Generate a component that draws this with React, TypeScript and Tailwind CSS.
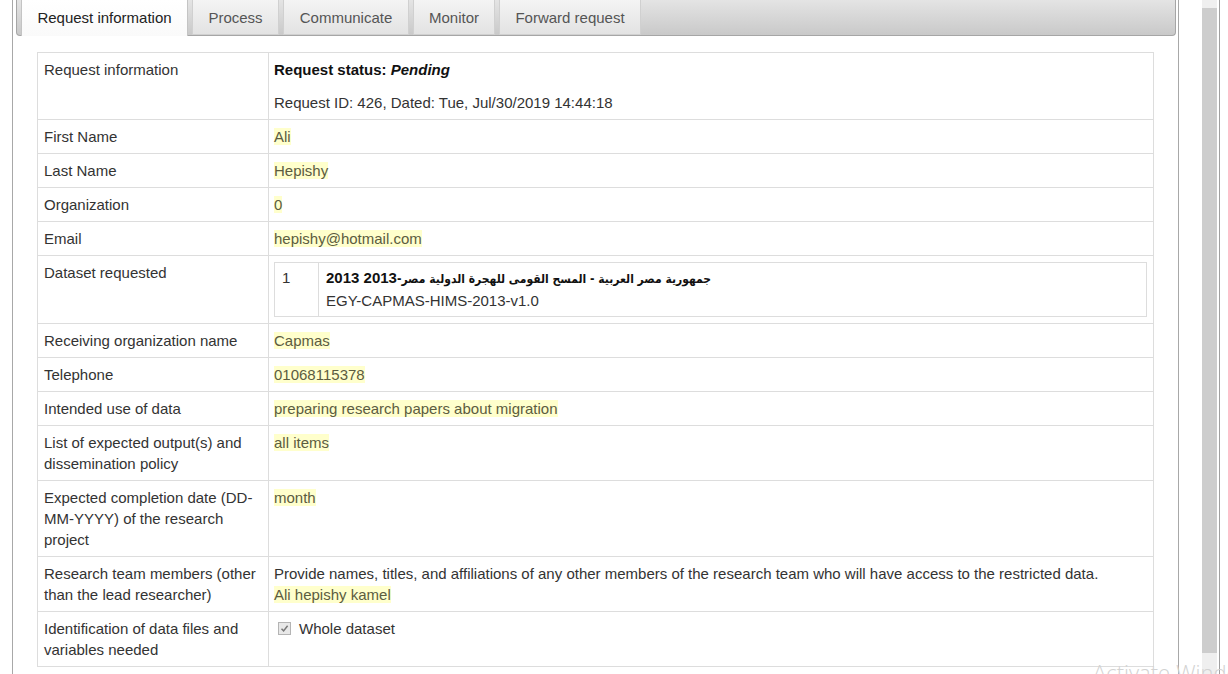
import React from "react";

type Row = {
  label: React.ReactNode;
  value: React.ReactNode;
};

const FONT = { fontFamily: '"Liberation Sans", Arial, "DejaVu Sans", sans-serif' };
const ARABIC = { fontFamily: '"DejaVu Sans Condensed", "DejaVu Sans", sans-serif' };

function Hl({ children }: { children: React.ReactNode }) {
  return <span className="bg-[#ffffcc] text-[#5c5c40]">{children}</span>;
}

const tabs = [
  { name: "Request information", w: "w-[167px]", active: true },
  { name: "Process", w: "w-[87px]", active: false },
  { name: "Communicate", w: "w-[126px]", active: false },
  { name: "Monitor", w: "w-[82px]", active: false },
  { name: "Forward request", w: "w-[142px]", active: false },
];

const rows: Row[] = [
  {
    label: "Request information",
    value: (
      <>
        <div className="mb-[12px] font-bold text-[#111]">
          Request status: <i>Pending</i>
        </div>
        <div>Request ID: 426, Dated: Tue, Jul/30/2019 14:44:18</div>
      </>
    ),
  },
  { label: "First Name", value: <Hl>Ali</Hl> },
  { label: "Last Name", value: <Hl>Hepishy</Hl> },
  { label: "Organization", value: <Hl>0</Hl> },
  { label: "Email", value: <Hl>hepishy@hotmail.com</Hl> },
  {
    label: "Dataset requested",
    value: (
      <table className="w-full border-collapse border border-[#dddddd] leading-[22px]">
        <tbody>
          <tr>
            <td className="w-[44px] border-r border-[#dddddd] px-[7px] pt-[4px] pb-[4px] align-top">1</td>
            <td className="px-[7px] pt-[4px] pb-[4px] align-top">
              <div className="font-bold text-[#111]">
                <span className="text-[12px]" style={ARABIC}>
                  جمهورية مصر العربية - المسح القومى للهجرة الدولية مصر-
                </span>
                2013 2013
              </div>
              <div>EGY-CAPMAS-HIMS-2013-v1.0</div>
            </td>
          </tr>
        </tbody>
      </table>
    ),
  },
  { label: "Receiving organization name", value: <Hl>Capmas</Hl> },
  { label: "Telephone", value: <Hl>01068115378</Hl> },
  { label: "Intended use of data", value: <Hl>preparing research papers about migration</Hl> },
  {
    label: (
      <>
        List of expected output(s) and
        <br />
        dissemination policy
      </>
    ),
    value: <Hl>all items</Hl>,
  },
  {
    label: (
      <>
        Expected completion date (DD-
        <br />
        MM-YYYY) of the research
        <br />
        project
      </>
    ),
    value: <Hl>month</Hl>,
  },
  {
    label: (
      <>
        Research team members (other
        <br />
        than the lead researcher)
      </>
    ),
    value: (
      <>
        <div>
          Provide names, titles, and affiliations of any other members of the research team who will
          have access to the restricted data.
        </div>
        <div>
          <Hl>Ali hepishy kamel</Hl>
        </div>
      </>
    ),
  },
  {
    label: (
      <>
        Identification of data files and
        <br />
        variables needed
      </>
    ),
    value: (
      <div className="flex items-center">
        <span className="ml-[4px] mr-[8px] flex h-[13px] w-[13px] items-center justify-center border border-[#b4b4b4] bg-[#e8e8e8]">
          <svg width="9" height="9" viewBox="0 0 9 9">
            <path d="M1.5 4.8 L3.6 6.9 L7.6 1.8" fill="none" stroke="#777" strokeWidth="1.5" />
          </svg>
        </span>
        <span>Whole dataset</span>
      </div>
    ),
  },
];

export default function App() {
  return (
    <div
      className="relative flex h-[674px] w-[1228px] overflow-hidden bg-white text-[15px] text-[#333]"
      style={FONT}
    >
      <div className="w-[12px] shrink-0" />
      {/* panel */}
      <div className="h-full w-[1167px] shrink-0 border-x border-[#a8a8a8]">
        <div className="ml-[3px] h-[36px] w-[1160px] rounded-b-[4px] border-x border-b border-[#a6a6a6] bg-gradient-to-b from-[#e4e4e4] to-[#c9c9c9]">
          <div className="flex h-full items-start gap-[4px] pl-[4px]">
            {tabs.map((t) => (
              <div
                key={t.name}
                className={
                  t.active
                    ? `relative z-10 flex h-[36px] ${t.w} items-center justify-center border-x border-[#c4c4c4] bg-gradient-to-b from-[#ffffff] to-[#fafafa] pt-[1px] text-[#222]`
                    : `flex h-[35px] ${t.w} items-center justify-center border-x border-b border-[#d0d0d0] bg-gradient-to-b from-[#f4f4f4] to-[#e3e3e3] pt-[2px] text-[#555]`
                }
              >
                {t.name}
              </div>
            ))}
          </div>
        </div>

        <table className="ml-[24px] mt-[16px] w-[1117px] border-collapse border border-[#dddddd] leading-[21px]">
          <tbody>
            {rows.map((r, i) => (
              <tr key={i} className="border-b border-[#dddddd]">
                <td className="w-[231px] border-r border-[#dddddd] pt-[6px] pb-[6px] pl-[6px] pr-[4px] align-top">
                  {r.label}
                </td>
                <td className="pt-[6px] pb-[6px] pl-[5px] pr-[6px] align-top">{r.value}</td>
              </tr>
            ))}
          </tbody>
        </table>
      </div>

      {/* scrollbar */}
      <div className="w-[23px] shrink-0" />
      <div className="flex h-full w-[15px] shrink-0 flex-col bg-[#efefef]">
        <div className="h-[8px]" />
        <div className="h-[645px] bg-[#cdcdcd]" />
      </div>
      <div className="w-[2px] shrink-0" />
      <div className="h-full w-[1px] shrink-0 bg-[#a0a0a0]" />

      <div
        className="pointer-events-none absolute left-[1093px] top-[656px] whitespace-nowrap text-[22px] text-[#d2d2d2]"
        style={{ fontFamily: '"Open Sans", "Liberation Sans", sans-serif', fontWeight: 300 }}
      >
        Activate Windows
      </div>
    </div>
  );
}
